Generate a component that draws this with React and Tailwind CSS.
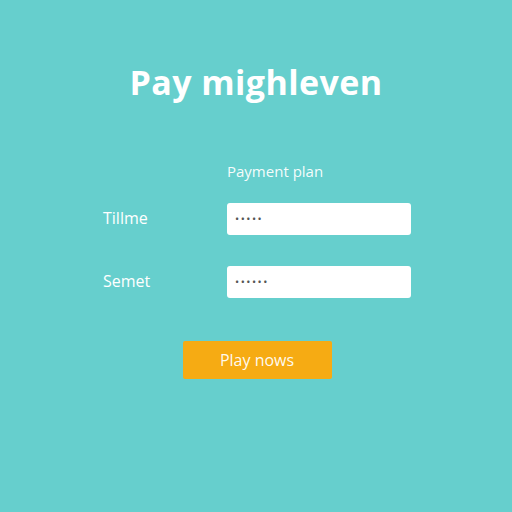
export default function App() {
  return (
    <div
      className="w-[512px] h-[512px] bg-[#66cfcd] text-white overflow-hidden"
      style={{ fontFamily: "'Open Sans', 'Liberation Sans', sans-serif" }}
    >
      <h1 className="pt-[62px] h-[103px] text-center text-[34px] leading-[40px] font-bold tracking-[0.4px]">
        Pay mighleven
      </h1>

      <div className="ml-[103px] w-[308px] grid grid-cols-[124px_184px]">
        <div />
        <p className="mt-[58px] text-[15px] leading-[20px] text-white/95">Payment plan</p>

        <label className="mt-[22px] h-[30px] flex items-center text-[16px]">Tillme</label>
        <div className="mt-[22px] h-[32px] bg-white rounded-[3px] flex items-center px-[8px] text-[#555] text-[11px] tracking-[1.5px]">
          •••••
        </div>

        <label className="mt-[31px] h-[30px] flex items-center text-[16px]">Semet</label>
        <div className="mt-[31px] h-[32px] bg-white rounded-[3px] flex items-center px-[8px] text-[#555] text-[11px] tracking-[1.5px]">
          ••••••
        </div>
      </div>

      <div className="mt-[43px] flex justify-center">
        <button className="ml-[2px] w-[149px] h-[38px] bg-[#f6ab13] rounded-[2px] text-[16px] text-white/95">
          Play nows
        </button>
      </div>
    </div>
  );
}
